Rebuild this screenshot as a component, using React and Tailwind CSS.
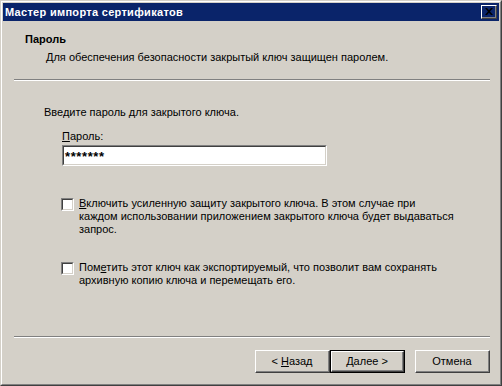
function Raised({ className = '', children }) {
  return (
    <div className={`border-l border-t border-white border-b border-r border-b-[#404040] border-r-[#404040] ${className}`}>
      <div className="flex h-full w-full items-center justify-center border-b border-r border-[#808080]">
        {children}
      </div>
    </div>
  )
}

function Sunken({ className = '', children }) {
  return (
    <div className={`border border-t-[#808080] border-l-[#808080] border-b-white border-r-white ${className}`}>
      <div className="h-full w-full border border-t-[#404040] border-l-[#404040] border-b-[#d4d0c8] border-r-[#d4d0c8] bg-white">
        {children}
      </div>
    </div>
  )
}

function Button({ children, isDefault }) {
  if (isDefault) {
    return (
      <div className="h-[23px] w-[75px] border border-black">
        <Raised className="h-full w-full">{children}</Raised>
      </div>
    )
  }
  return <Raised className="h-[23px] w-[75px]">{children}</Raised>
}

function Separator({ className = '' }) {
  return <div className={`h-[2px] border-t border-b border-t-[#808080] border-b-white ${className}`} />
}

function Check({ children }) {
  return (
    <div className="flex items-start">
      <Sunken className="h-[13px] w-[13px] shrink-0" />
      <p className="ml-[5px] -mt-[1px] leading-[13px]">{children}</p>
    </div>
  )
}

export default function App() {
  return (
    <div className="h-[386px] w-[502px] bg-[#d4d0c8] text-[11px] text-black font-['Liberation_Sans',Arial,sans-serif]">
      <div className="h-full w-full border border-t-[#d4d0c8] border-l-[#d4d0c8] border-b-[#404040] border-r-[#404040]">
        <div className="flex h-full w-full flex-col border border-t-white border-l-white border-b-[#808080] border-r-[#808080] p-px">
          <div className="flex h-[18px] items-center justify-between bg-[#0a246a] pl-[2px] pr-[2px]">
            <span className="font-bold text-white leading-[13px] tracking-[0.3px]">Мастер импорта сертификатов</span>
            <Raised className="h-[14px] w-[16px]">
              <svg width="8" height="7" viewBox="0 0 8 7">
                <path d="M0 0h2l2 2.2L6 0h2L5 3.5 8 7H6L4 4.8 2 7H0l3-3.5z" fill="#000" />
              </svg>
            </Raised>
          </div>

          <div className="pl-[22px] pt-[12px]">
            <p className="font-bold leading-[13px]">Пароль</p>
            <p className="ml-[21px] mt-[5px] leading-[13px]">
              Для обеспечения безопасности закрытый ключ защищен паролем.
            </p>
          </div>
          <Separator className="ml-[11px] mr-[9px] mt-[15px]" />

          <div className="flex-1 pl-[41px] pt-[25px]">
            <p className="leading-[13px]">Введите пароль для закрытого ключа.</p>
            <div className="ml-[18px] mt-[11px]">
              <p className="leading-[13px]">
                <span className="underline">П</span>ароль:
              </p>
              <Sunken className="mt-[2px] h-[21px] w-[265px]">
                <div className="pl-[1px] pt-[3px] text-[13px] font-bold leading-[13px] tracking-[0.6px]">*******</div>
              </Sunken>
            </div>

            <div className="ml-[17px] mt-[32px]">
              <Check>
                <span className="underline">В</span>ключить усиленную защиту закрытого ключа. В этом случае при
                <br />
                каждом использовании приложением закрытого ключа будет выдаваться
                <br />
                запрос.
              </Check>
            </div>
            <div className="ml-[17px] mt-[26px]">
              <Check>
                Пом<span className="underline">е</span>тить этот ключ как экспортируемый, что позволит вам сохранять
                <br />
                архивную копию ключа и перемещать его.
              </Check>
            </div>
          </div>

          <Separator className="ml-[11px] mr-[9px]" />
          <div className="flex justify-end pb-[10px] pr-[9px] pt-[12px]">
            <Button>
              &lt; <span className="ml-[3px] underline">Н</span>азад
            </Button>
            <Button isDefault>
              <span className="underline">Д</span>алее &gt;
            </Button>
            <div className="ml-[10px]">
              <Button>Отмена</Button>
            </div>
          </div>
        </div>
      </div>
    </div>
  )
}
